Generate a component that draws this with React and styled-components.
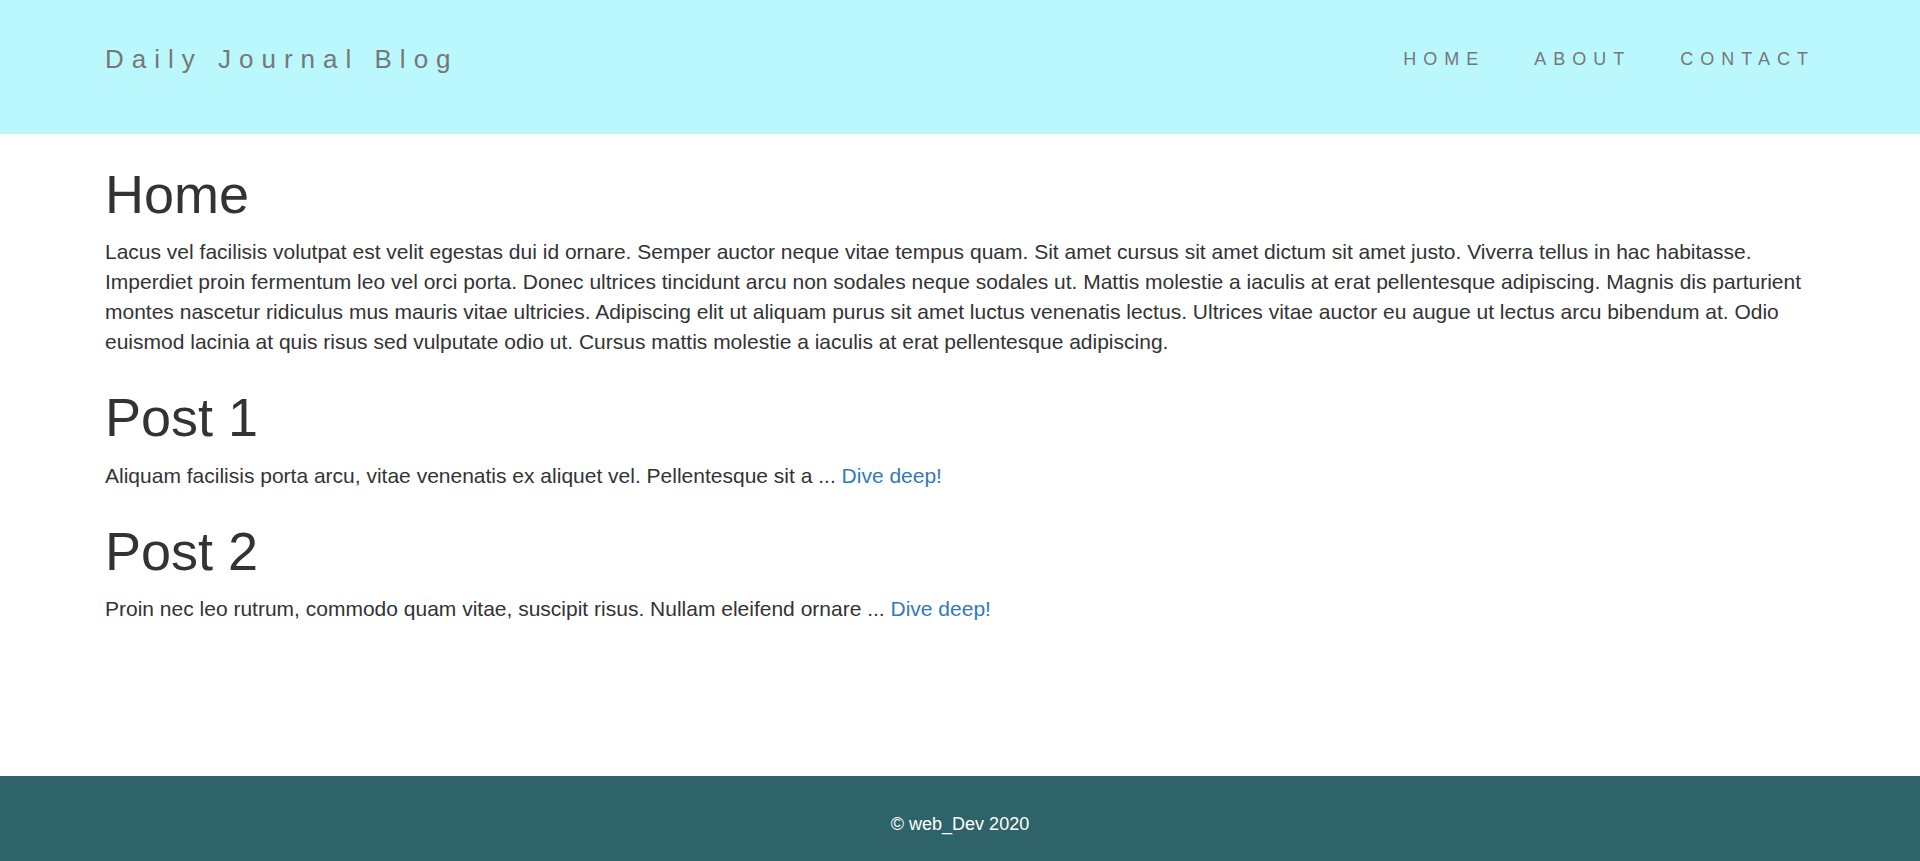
import styled, { createGlobalStyle } from "styled-components";

const GlobalStyle = createGlobalStyle`
  html, body {
    margin: 0;
    padding: 0;
  }
  body {
    font-family: "Liberation Sans", Arial, Helvetica, sans-serif;
    color: #333;
    background: #fff;
  }
`;

const Page = styled.div`
  min-height: 100vh;
  display: flex;
  flex-direction: column;
`;

const Header = styled.header`
  background-color: #bbf8fd;
  height: 134px;
  box-sizing: border-box;
  padding-bottom: 17px;
`;

const Container = styled.div`
  width: 1710px;
  margin: 0 auto;
`;

const Navbar = styled(Container)`
  height: 100%;
  display: flex;
  align-items: center;
  justify-content: space-between;
`;

const Brand = styled.a`
  font-size: 26px;
  line-height: 26px;
  letter-spacing: 8px;
  color: #777;
  text-decoration: none;
`;

const NavList = styled.ul`
  list-style: none;
  margin: 0;
  padding: 0;
  display: flex;
  gap: 49px;
`;

const NavLink = styled.a`
  display: block;
  font-size: 18px;
  line-height: 18px;
  letter-spacing: 7px;
  color: #777;
  text-decoration: none;
`;

const Main = styled.main`
  flex: 1;
  padding-bottom: 40px;
`;

const Title = styled.h1`
  font-size: 54px;
  font-weight: 500;
  line-height: 1.1;
  margin: 31px 0 13px;
`;

const Text = styled.p`
  font-size: 21px;
  line-height: 30px;
  margin: 0 0 10px;
`;

const Link = styled.a`
  color: #337ab7;
  text-decoration: none;
`;

const Footer = styled.footer`
  background-color: #2e6469;
  height: 85px;
  box-sizing: border-box;
  padding-top: 35px;
  text-align: center;
  color: #fff;
  font-size: 18px;
  line-height: 27px;
`;

const posts = [
  {
    title: "Post 1",
    text: "Aliquam facilisis porta arcu, vitae venenatis ex aliquet vel. Pellentesque sit a ...",
  },
  {
    title: "Post 2",
    text: "Proin nec leo rutrum, commodo quam vitae, suscipit risus. Nullam eleifend ornare ...",
  },
];

export default function App() {
  return (
    <Page>
      <GlobalStyle />
      <Header>
        <Navbar>
          <Brand href="#">Daily Journal Blog</Brand>
          <NavList>
            <li><NavLink href="#">HOME</NavLink></li>
            <li><NavLink href="#">ABOUT</NavLink></li>
            <li><NavLink href="#">CONTACT</NavLink></li>
          </NavList>
        </Navbar>
      </Header>
      <Main>
        <Container>
          <Title>Home</Title>
          <Text>
            Lacus vel facilisis volutpat est velit egestas dui id ornare. Semper auctor neque vitae tempus quam. Sit amet cursus sit amet dictum sit amet justo. Viverra tellus in hac habitasse. Imperdiet proin fermentum leo vel orci porta. Donec ultrices tincidunt arcu non sodales neque sodales ut. Mattis molestie a iaculis at erat pellentesque adipiscing. Magnis dis parturient montes nascetur ridiculus mus mauris vitae ultricies. Adipiscing elit ut aliquam purus sit amet luctus venenatis lectus. Ultrices vitae auctor eu augue ut lectus arcu bibendum at. Odio euismod lacinia at quis risus sed vulputate odio ut. Cursus mattis molestie a iaculis at erat pellentesque adipiscing.
          </Text>
          {posts.map((post) => (
            <div key={post.title}>
              <Title>{post.title}</Title>
              <Text>
                {post.text} <Link href="#">Dive deep!</Link>
              </Text>
            </div>
          ))}
        </Container>
      </Main>
      <Footer>© web_Dev 2020</Footer>
    </Page>
  );
}
